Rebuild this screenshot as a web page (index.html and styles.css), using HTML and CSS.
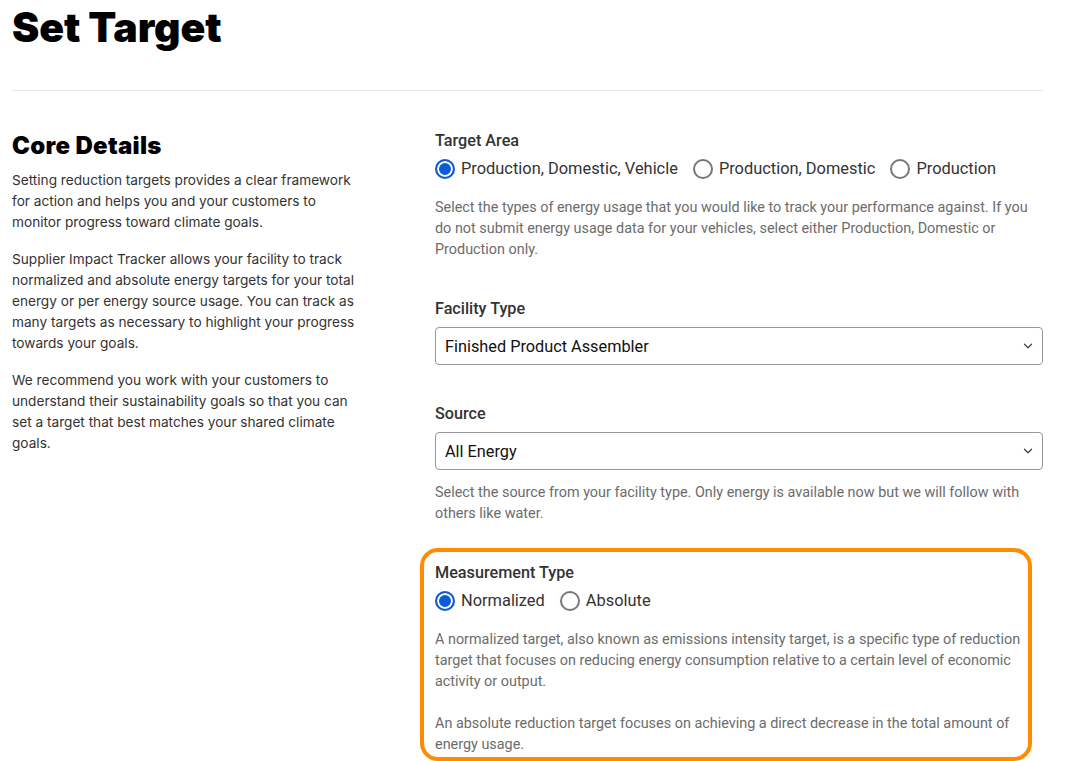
FILE: index.html
```html
<!DOCTYPE html>
<html lang="en">
<head>
<meta charset="utf-8">
<title>Set Target</title>
<link rel="stylesheet" href="styles.css">
</head>
<body>
<div class="page">
  <h1 class="title">Set Target</h1>
  <hr class="divider">
  <div class="layout">
    <div class="intro">
      <h2 class="intro-title">Core Details</h2>
      <p>Setting reduction targets provides a clear framework for action and helps you and your customers to monitor progress toward climate goals.</p>
      <p>Supplier Impact Tracker allows your facility to track normalized and absolute energy targets for your total energy or per energy source usage. You can track as many targets as necessary to highlight your progress towards your goals.</p>
      <p>We recommend you work with your customers to understand their sustainability goals so that you can set a target that best matches your shared climate goals.</p>
    </div>
    <div class="form">
      <section class="field">
        <div class="label">Target Area</div>
        <div class="radios">
          <label class="radio"><span class="dot checked"></span>Production, Domestic, Vehicle</label>
          <label class="radio"><span class="dot"></span>Production, Domestic</label>
          <label class="radio"><span class="dot"></span>Production</label>
        </div>
        <p class="help">Select the types of energy usage that you would like to track your performance against. If you do not submit energy usage data for your vehicles, select either Production, Domestic or Production only.</p>
      </section>
      <section class="field">
        <div class="label label-select">Facility Type</div>
        <div class="select"><span>Finished Product Assembler</span>
          <svg class="chev" width="10" height="6" viewBox="0 0 10 6"><path d="M1.5 1.2l3.5 3.5 3.5-3.5" fill="none" stroke="#444" stroke-width="1.3" stroke-linecap="round" stroke-linejoin="round"/></svg>
        </div>
      </section>
      <section class="field">
        <div class="label label-select">Source</div>
        <div class="select"><span>All Energy</span>
          <svg class="chev" width="10" height="6" viewBox="0 0 10 6"><path d="M1.5 1.2l3.5 3.5 3.5-3.5" fill="none" stroke="#444" stroke-width="1.3" stroke-linecap="round" stroke-linejoin="round"/></svg>
        </div>
        <p class="help help-tight">Select the source from your facility type. Only energy is available now but we will follow with others like water.</p>
      </section>
      <section class="field highlighted">
        <div class="label">Measurement Type</div>
        <div class="radios">
          <label class="radio"><span class="dot checked"></span>Normalized</label>
          <label class="radio"><span class="dot"></span>Absolute</label>
        </div>
        <p class="help">A normalized target, also known as emissions intensity target, is a specific type of reduction target that focuses on reducing energy consumption relative to a certain level of economic activity or output.</p>
        <p class="help help-second">An absolute reduction target focuses on achieving a direct decrease in the total amount of energy usage.</p>
        <div class="highlight"></div>
      </section>
    </div>
  </div>
</div>
</body>
</html>
```

FILE: styles.css
```css
* { box-sizing: border-box; }
html, body { margin: 0; padding: 0; background: #fff; }
body { font-family: Roboto, "Liberation Sans", sans-serif; color: #333; }
.page { width: 1055px; padding: 0 12px; }
.title {
  font-family: Inter, "Liberation Sans", sans-serif;
  font-weight: 900;
  font-size: 41px;
  line-height: 48px;
  margin: 3px 0 0 0;
  color: #000;
  letter-spacing: -0.1px;
}
.divider {
  border: 0;
  border-top: 1px solid #e6e6e6;
  margin: 39px 0 0 0;
  width: 1031px;
}
.layout {
  display: grid;
  grid-template-columns: 350px 608px;
  column-gap: 73px;
  padding-top: 38px;
}
.intro-title {
  font-family: Inter, "Liberation Sans", sans-serif;
  font-weight: 900;
  font-size: 24px;
  line-height: 30px;
  margin: 2px 0 9px 0;
  color: #000;
  letter-spacing: 0.3px;
}
.intro p {
  font-family: Inter, "Liberation Sans", sans-serif;
  font-size: 13.65px;
  line-height: 21px;
  margin: 0 0 16px 0;
  color: #333;
}
.field { margin-bottom: 37px; position: relative; }
.label {
  font-size: 16.2px;
  font-weight: 500;
  line-height: 24px;
  color: #333;
}
.label-select { margin-bottom: 6px; }
.radios { display: flex; gap: 15px; margin-top: 4px; }
.radio {
  display: flex;
  align-items: center;
  gap: 6px;
  font-size: 16.4px;
  line-height: 24px;
  color: #333;
}
.dot {
  width: 20px;
  height: 20px;
  border-radius: 50%;
  border: 2px solid #777;
  display: inline-block;
  flex: none;
}
.dot.checked {
  border: 2px solid #0b5cd5;
  background: #0b5cd5;
  box-shadow: inset 0 0 0 2px #fff;
}
.select {
  height: 38px;
  border: 1px solid #999;
  border-radius: 4px;
  display: flex;
  align-items: center;
  justify-content: space-between;
  padding: 0 9px 0 9px;
  font-size: 16.3px;
  color: #111;
}
.help {
  font-size: 14.4px;
  line-height: 21px;
  color: #6c6c6c;
  margin: 16px 0 0 0;
}
.help-tight { margin-top: 12px; }
.help-second { margin-top: 21px; }
.highlight {
  position: absolute;
  top: -13px;
  left: -15px;
  right: 11px;
  bottom: -6px;
  border: 4px solid #ff8c00;
  border-radius: 18px;
  pointer-events: none;
}
```
